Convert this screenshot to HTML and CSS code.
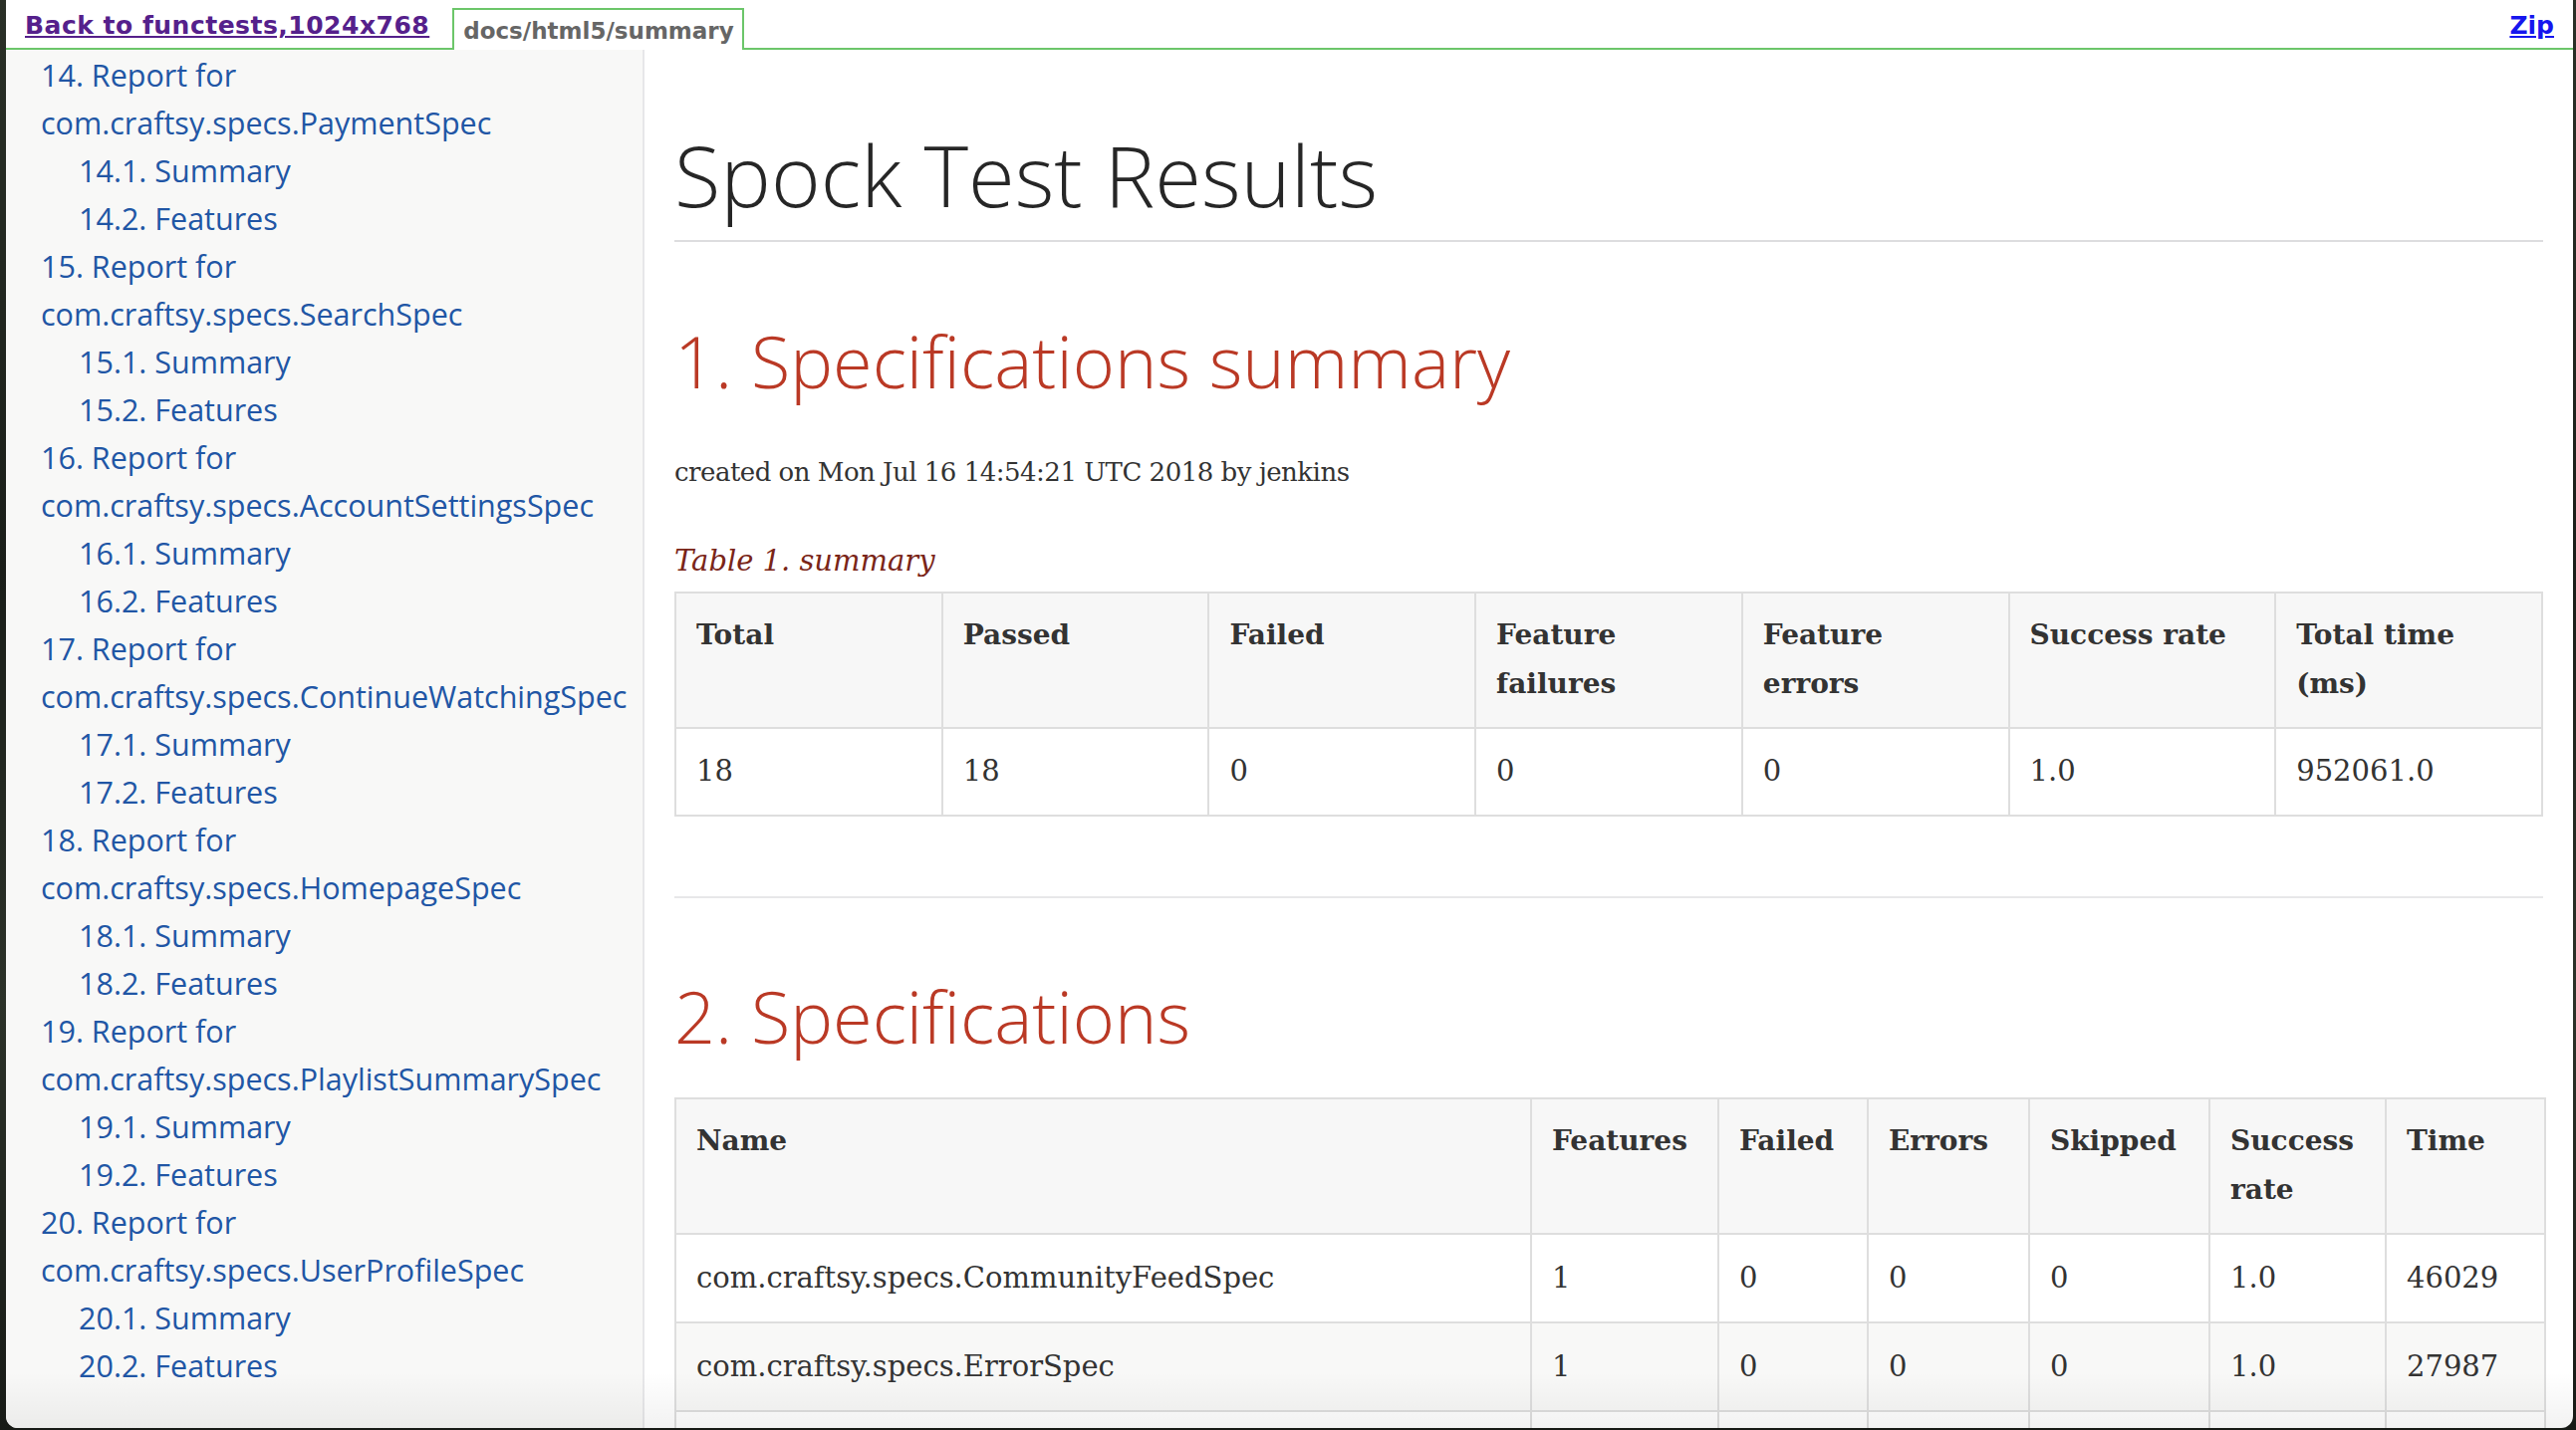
FILE: index.html
```html
<!DOCTYPE html>
<html lang="en">
<head>
<meta charset="utf-8">
<title>Spock Test Results</title>
<link rel="stylesheet" href="styles.css">
</head>
<body>
<div class="window">
  <header class="topbar">
    <a class="back" href="#">Back to functests,1024x768</a>
    <span class="tab">docs/html5/summary</span>
    <a class="zip" href="#">Zip</a>
  </header>
  <div class="frame">
    <nav class="toc">
      <ul class="toc-l1">
        <li><a href="#">14. Report for com.craftsy.specs.PaymentSpec</a>
          <ul><li><a href="#">14.1. Summary</a></li><li><a href="#">14.2. Features</a></li></ul></li>
        <li><a href="#">15. Report for com.craftsy.specs.SearchSpec</a>
          <ul><li><a href="#">15.1. Summary</a></li><li><a href="#">15.2. Features</a></li></ul></li>
        <li><a href="#">16. Report for com.craftsy.specs.AccountSettingsSpec</a>
          <ul><li><a href="#">16.1. Summary</a></li><li><a href="#">16.2. Features</a></li></ul></li>
        <li><a href="#">17. Report for com.craftsy.specs.ContinueWatchingSpec</a>
          <ul><li><a href="#">17.1. Summary</a></li><li><a href="#">17.2. Features</a></li></ul></li>
        <li><a href="#">18. Report for com.craftsy.specs.HomepageSpec</a>
          <ul><li><a href="#">18.1. Summary</a></li><li><a href="#">18.2. Features</a></li></ul></li>
        <li><a href="#">19. Report for com.craftsy.specs.PlaylistSummarySpec</a>
          <ul><li><a href="#">19.1. Summary</a></li><li><a href="#">19.2. Features</a></li></ul></li>
        <li><a href="#">20. Report for com.craftsy.specs.UserProfileSpec</a>
          <ul><li><a href="#">20.1. Summary</a></li><li><a href="#">20.2. Features</a></li></ul></li>
      </ul>
    </nav>
    <main class="content">
      <h1 class="title">Spock Test Results</h1>
      <section class="sect sect-first">
        <h2>1. Specifications summary</h2>
        <p class="meta">created on Mon Jul 16 14:54:21 UTC 2018 by jenkins</p>
        <div class="caption">Table 1. summary</div>
        <table class="grid summary">
          <thead>
            <tr><th>Total</th><th>Passed</th><th>Failed</th><th>Feature failures</th><th>Feature errors</th><th>Success rate</th><th>Total time (ms)</th></tr>
          </thead>
          <tbody>
            <tr><td>18</td><td>18</td><td>0</td><td>0</td><td>0</td><td>1.0</td><td>952061.0</td></tr>
          </tbody>
        </table>
      </section>
      <section class="sect sect-next">
        <h2>2. Specifications</h2>
        <table class="grid specs">
          <colgroup>
            <col class="c-name"><col class="c-feat"><col class="c-fail"><col class="c-err"><col class="c-skip"><col class="c-rate"><col class="c-time">
          </colgroup>
          <thead>
            <tr><th>Name</th><th>Features</th><th>Failed</th><th>Errors</th><th>Skipped</th><th>Success rate</th><th>Time</th></tr>
          </thead>
          <tbody>
            <tr><td>com.craftsy.specs.CommunityFeedSpec</td><td>1</td><td>0</td><td>0</td><td>0</td><td>1.0</td><td>46029</td></tr>
            <tr><td>com.craftsy.specs.ErrorSpec</td><td>1</td><td>0</td><td>0</td><td>0</td><td>1.0</td><td>27987</td></tr>
            <tr class="more"><td></td><td></td><td></td><td></td><td></td><td></td><td></td></tr>
          </tbody>
        </table>
      </section>
    </main>
  </div>
  <div class="shade"></div>
</div>
</body>
</html>
```
FILE: styles.css
```css
* { box-sizing: border-box; }

html, body {
  margin: 0;
  padding: 0;
}

body {
  height: 1436px;
  overflow: hidden;
  background: #1d221c linear-gradient(180deg, #2a3027 0%, #1a1e19 40%, #2c3229 70%, #171a16 100%);
  font-family: "DejaVu Serif", serif;
}

.window {
  position: relative;
  margin-left: 6px;
  width: 2577px;
  height: 1434px;
  background: #fff;
  border-radius: 0 0 12px 12px;
  overflow: hidden;
  display: flex;
  flex-direction: column;
}

/* ---------- top bar ---------- */
.topbar {
  flex: none;
  height: 50px;
  border-bottom: 2px solid #6cc66a;
  padding: 8px 19px 0 19px;
  display: flex;
  align-items: flex-start;
  font-family: "DejaVu Sans", Verdana, sans-serif;
  font-weight: bold;
}

.back {
  margin-top: 3px;
  font-size: 25px;
  line-height: 30px;
  letter-spacing: 0.5px;
  color: #55208b;
}

.tab {
  margin-left: 23px;
  height: 42px;
  border: 2px solid #6cc66a;
  border-bottom: 0;
  background: #fff;
  padding: 6px 8px 0 9px;
  font-size: 23px;
  line-height: 30px;
  color: #666;
  position: relative;
}

.zip {
  margin-left: auto;
  margin-top: 3px;
  font-size: 25px;
  line-height: 30px;
  color: #1616ee;
}

/* ---------- frame ---------- */
.frame {
  flex: 1;
  min-height: 0;
  display: flex;
}

.toc {
  flex: none;
  width: 641px;
  background: #f8f8f7;
  border-right: 2px solid #e7e7e9;
  padding: 1px 30px 0 35px;
  font-family: "Open Sans", sans-serif;
  font-size: 30.5px;
  line-height: 48px;
}

.toc ul {
  list-style: none;
  margin: 0;
  padding: 0;
}

.toc ul ul {
  padding-left: 38px;
}

.toc a {
  color: #2156a5;
  text-decoration: none;
}

.content {
  flex: 1;
  min-width: 0;
  padding: 0 30px;
}

.title {
  margin: 75px 0 0;
  padding-bottom: 16px;
  border-bottom: 2px solid #dddddf;
  font-family: "Open Sans", sans-serif;
  font-weight: 300;
  font-size: 85px;
  line-height: 100px;
  color: rgba(0, 0, 0, 0.85);
}

.sect h2 {
  margin: 76px 0 0;
  font-family: "Open Sans", sans-serif;
  font-weight: 300;
  font-size: 72px;
  line-height: 86px;
  color: #ba3925;
}

.sect-first {
  padding-bottom: 80px;
}

.sect-next {
  border-top: 2px solid #e7e7e9;
}

.sect-next h2 {
  margin-top: 75px;
}

.meta {
  margin: 45px 0 0;
  font-size: 26px;
  letter-spacing: -0.5px;
  line-height: 48px;
  color: #333;
}

.caption {
  margin: 43px 0 9px;
  font-style: italic;
  font-size: 29px;
  line-height: 44px;
  color: #7a2518;
}

.grid {
  width: 100%;
  border-collapse: collapse;
  table-layout: fixed;
}

.specs {
  margin-top: 39px;
}

.grid th,
.grid td {
  border: 2px solid #dedede;
  text-align: left;
  vertical-align: top;
  line-height: 49px;
  color: #333;
}

.grid th {
  padding: 17px 24px 19px 20px;
  background: #f7f7f7;
  font-weight: bold;
  font-size: 28px;
}

.summary th {
  padding-right: 30px;
}

.grid td {
  padding: 18px 24px 19px 20px;
  font-size: 29px;
}

.specs td {
  padding-top: 19px;
}

.grid tbody tr:nth-child(even) td {
  background: #f8f8f7;
}

.grid tr.more td {
  height: 88px;
}

.c-name { width: 859px; }
.c-feat { width: 188px; }
.c-fail { width: 150px; }
.c-err  { width: 162px; }
.c-skip { width: 181px; }
.c-rate { width: 177px; }
.c-time { width: 160px; }

.shade {
  position: absolute;
  left: 0;
  right: 0;
  bottom: 0;
  height: 56px;
  background: linear-gradient(180deg, rgba(0, 0, 0, 0) 0%, rgba(0, 0, 0, 0.05) 100%);
  pointer-events: none;
}
```
